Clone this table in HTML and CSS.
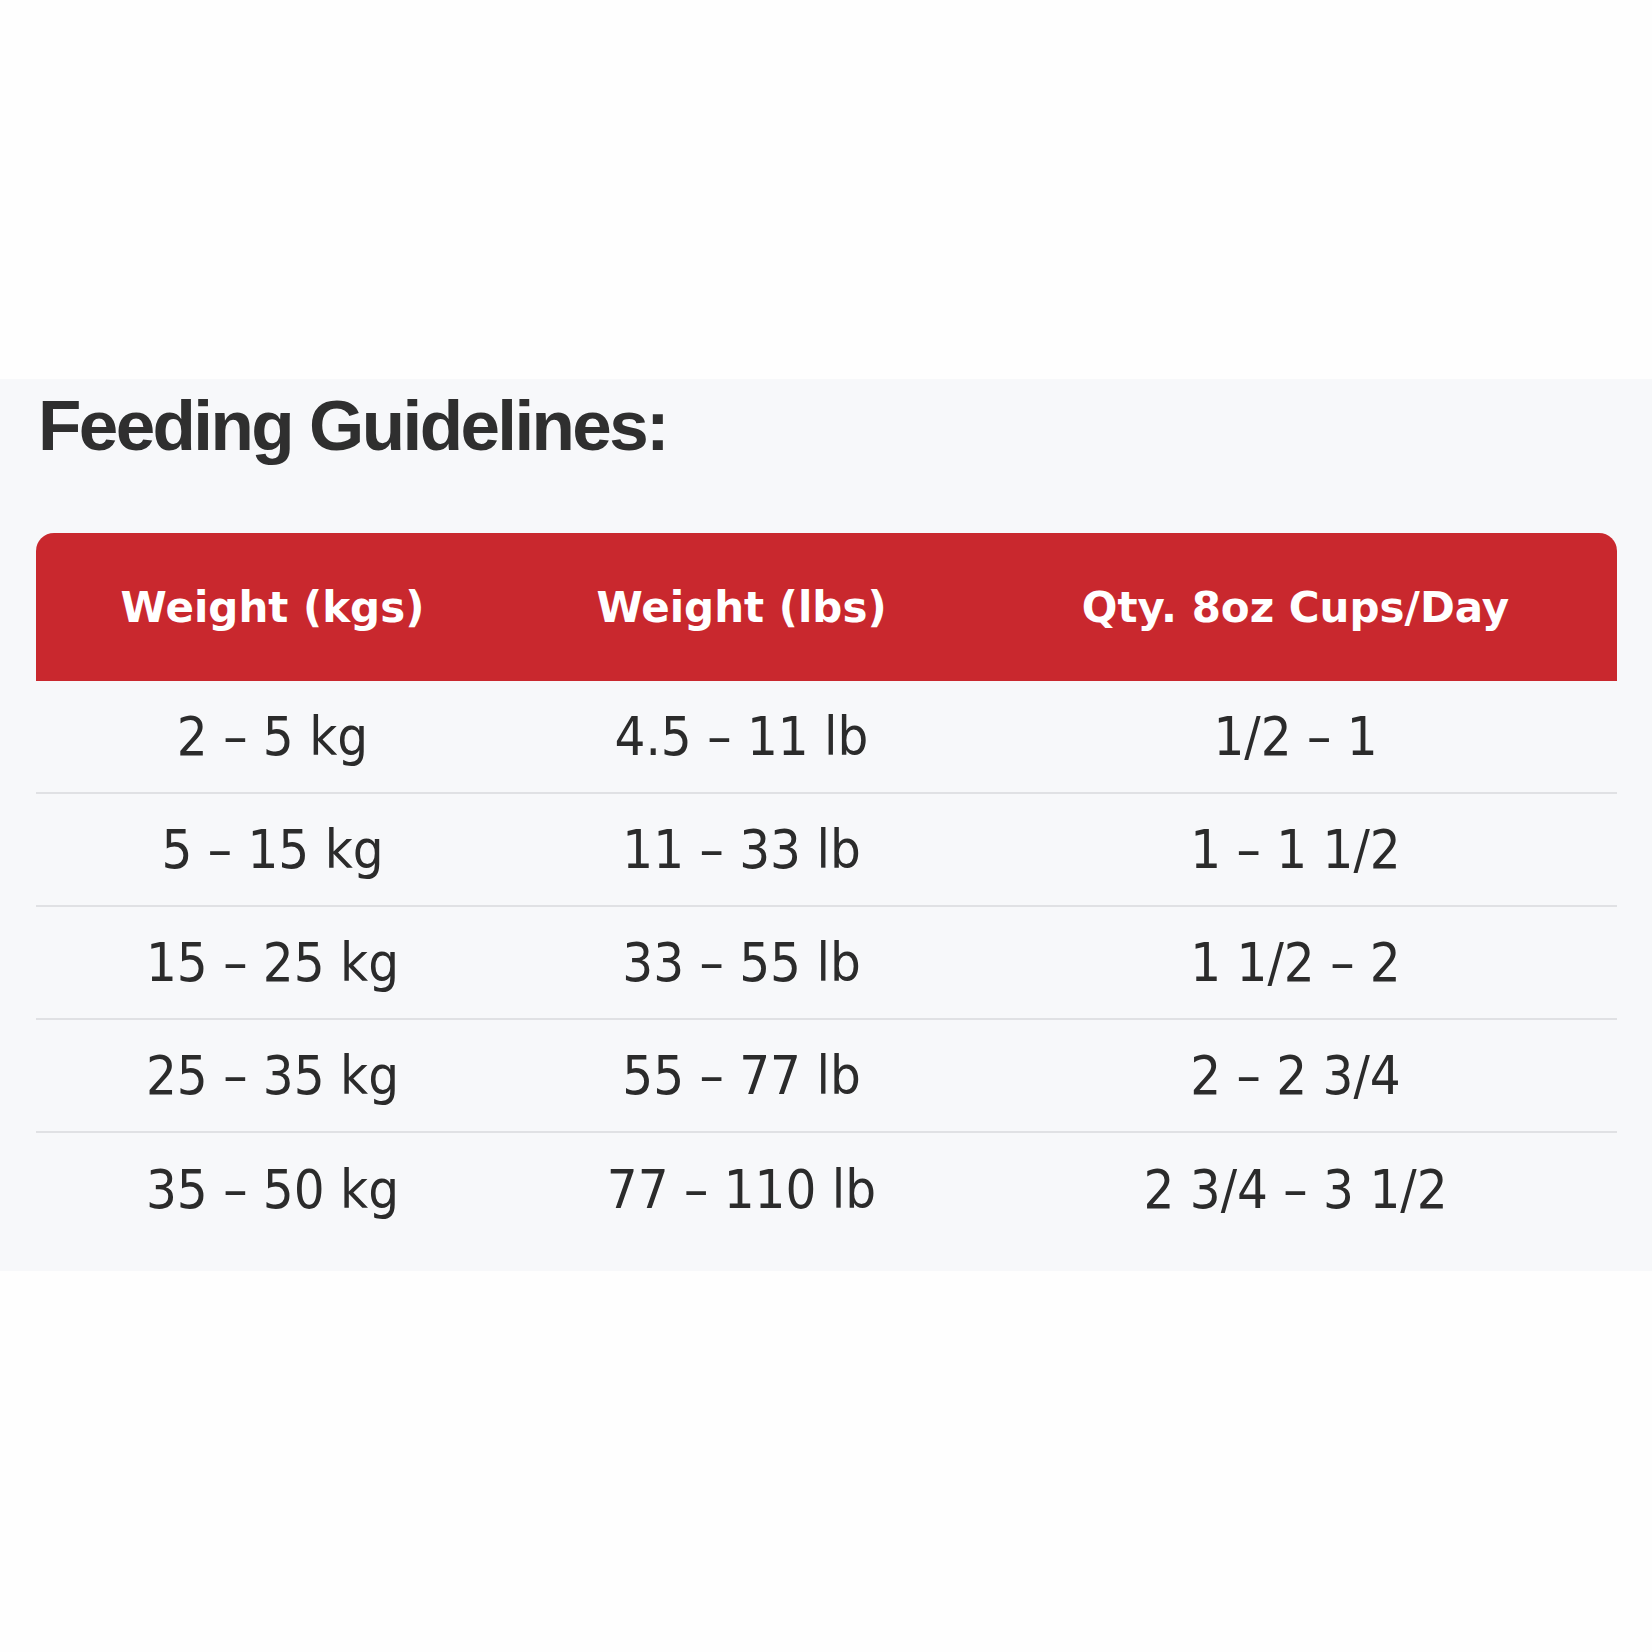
FILE: index.html
```html
<!DOCTYPE html>
<html lang="en">
<head>
<meta charset="utf-8">
<title>Feeding Guidelines</title>
<link rel="stylesheet" href="styles.css">
</head>
<body>
<section class="guide">
  <h2 class="guide-title">Feeding Guidelines:</h2>
  <table class="feed-table">
    <colgroup>
      <col class="c1"><col class="c2"><col class="c3">
    </colgroup>
    <thead>
      <tr>
        <th>Weight (kgs)</th>
        <th>Weight (lbs)</th>
        <th>Qty. 8oz Cups/Day</th>
      </tr>
    </thead>
    <tbody>
      <tr><td>2 – 5 kg</td><td>4.5 – 11 lb</td><td>1/2 – 1</td></tr>
      <tr><td>5 – 15 kg</td><td>11 – 33 lb</td><td>1 – 1 1/2</td></tr>
      <tr><td>15 – 25 kg</td><td>33 – 55 lb</td><td>1 1/2 – 2</td></tr>
      <tr><td>25 – 35 kg</td><td>55 – 77 lb</td><td>2 – 2 3/4</td></tr>
      <tr><td>35 – 50 kg</td><td>77 – 110 lb</td><td>2 3/4 – 3 1/2</td></tr>
    </tbody>
  </table>
</section>
</body>
</html>
```

FILE: styles.css
```css
html, body {
  margin: 0;
  padding: 0;
  background: #fefefe;
}

.guide {
  margin-top: 379px;
  background: #f7f8fa;
  padding: 11px 35px 25px 36px;
}

.guide-title {
  margin: 0 0 72px 2px;
  font-family: "Liberation Sans", Arial, sans-serif;
  font-weight: 700;
  font-size: 71px;
  line-height: 71px;
  letter-spacing: -2.6px;
  color: #2f2f2f;
}

.feed-table {
  width: 100%;
  border-collapse: separate;
  border-spacing: 0;
  table-layout: fixed;
}

.c1 { width: 473px; }
.c2 { width: 465px; }
.c3 { width: 643px; }

.feed-table th {
  height: 148px;
  padding: 0;
  background: #c9282e;
  color: #ffffff;
  font-family: "DejaVu Sans", Verdana, sans-serif;
  font-weight: 700;
  font-size: 42px;
  text-align: center;
  vertical-align: middle;
}

.feed-table th:first-child { border-top-left-radius: 18px; }
.feed-table th:last-child { border-top-right-radius: 18px; }

.feed-table td {
  height: 111px;
  padding: 0;
  border-bottom: 2px solid #e0e1e4;
  font-family: "DejaVu Sans Condensed", "DejaVu Sans", sans-serif;
  font-size: 54px;
  color: #2b2b2b;
  text-align: center;
  vertical-align: middle;
}

.feed-table tbody tr:last-child td {
  height: 113px;
  border-bottom: none;
}
```
